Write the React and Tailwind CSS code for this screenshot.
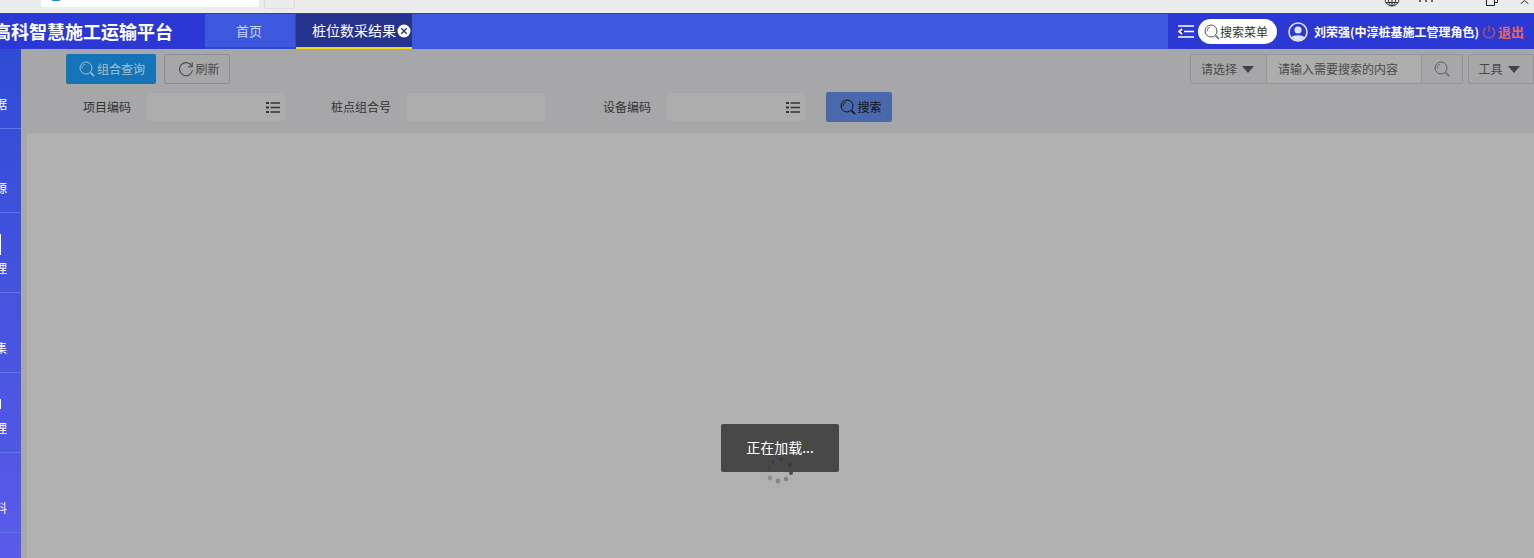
import React from "react";

const cjk = "font-['Microsoft_YaHei','Noto_Sans_CJK_SC','Liberation_Sans',sans-serif]";

// magnifier used on the toolbar buttons
function SearchIcon({ className = "", color = "currentColor", handle = "#56708e" }) {
  return (
    <svg viewBox="0 0 16 16" width="16" height="16" fill="none" className={className}>
      <circle cx="7" cy="7" r="6" stroke={color} strokeWidth="1" />
      <path d="M3 7.500A4 4 0 0 1 6 3.200" stroke={color} strokeWidth="0.8" />
      <path d="M11.500 11.500L15 15" stroke={handle} strokeWidth="1.700" />
    </svg>
  );
}

function ListIcon() {
  return (
    <svg viewBox="0 0 14 13" width="14" height="13" className="text-[#333]">
      <path d="M0 1h3v2H0zM0 5.500h3v2H0zM0 10h3v2H0z" fill="currentColor" />
      <path d="M4.500 1.300H14v1.400H4.500zM4.500 5.800H14v1.400H4.500zM4.500 10.300H14v1.400H4.500z" fill="currentColor" />
    </svg>
  );
}

function Caret({ color = "#444" }) {
  return (
    <svg viewBox="0 0 12 7" width="12" height="7">
      <path d="M0 0h12L6 7z" fill={color} />
    </svg>
  );
}

const sideItems = [
  { label: "数据", h: "h-[80px]" },
  { label: "资源", h: "h-[84px]" },
  { label: "管理", h: "h-[80px]", bar: "mb-[5px] h-[21px]" },
  { label: "采集", h: "h-[80px]" },
  { label: "管理", h: "h-[80px]", bar: "mb-[11px] h-[10px]" },
  { label: "资料", h: "h-[80px]" },
];

function Field({ label, labelW, list }) {
  return (
    <div className="flex items-center">
      <span className={`${labelW} text-right text-[12px] leading-[28px] text-[#333]`}>{label}</span>
      <div className="ml-[16px] flex h-[28px] w-[138px] items-center justify-end bg-[#adadad] pr-[5px]">
        {list && <ListIcon />}
      </div>
    </div>
  );
}

export default function App() {
  return (
    <div className={`${cjk} flex h-[558px] w-[1534px] flex-col overflow-hidden bg-[#b0b0b0]`}>
      {/* browser strip */}
      <div className="flex h-[13px] shrink-0 items-start overflow-hidden bg-[#ececec]">
        <div className="ml-[41px] h-[7px] w-[218px] rounded-b-[3px] bg-white pl-[11px]">
          <div className="h-[1px] w-[8px] bg-[#1f8fd8]" />
        </div>
        <div className="ml-[5px] h-[9px] w-[31px] rounded-b-[3px] border border-t-0 border-[#dcdcdc]" />
        <div className="ml-auto flex items-start pr-[5px]">
          <svg viewBox="0 0 16 7" width="16" height="7" fill="none" stroke="#333">
            <circle cx="8" cy="-1" r="7" />
            <path d="M8 0v6M4.500 0C4.500 3 6 5.500 8 6C10 5.500 11.500 3 11.500 0M1.500 2.500h13" />
          </svg>
          <div className="ml-[19px] flex gap-[4px]">
            <span className="h-[2px] w-[2px] bg-[#666]" />
            <span className="h-[2px] w-[2px] bg-[#666]" />
            <span className="h-[2px] w-[2px] bg-[#666]" />
          </div>
          <svg viewBox="0 0 12 6" width="12" height="6" fill="none" stroke="#222" className="ml-[53px]">
            <path d="M0.500 0V5.500H8.500V0M8.500 2.500H11.500V0" />
          </svg>
          <svg viewBox="0 0 9 4" width="9" height="4" fill="none" stroke="#222" className="ml-[22px]">
            <path d="M0.500 4L4.500 0.500L8.500 4" />
          </svg>
        </div>
      </div>

      {/* top nav */}
      <div className="flex h-[36px] shrink-0 border-t border-[#2c38d3] bg-[#3d58dd] text-white">
        <div className="flex h-full w-[205px] items-center justify-end overflow-hidden whitespace-nowrap bg-[#2c38d3] pr-[32px] text-[18px] font-bold">
          高科智慧施工运输平台
        </div>
        <div className="flex h-full w-[91px] items-center justify-center border-r border-b-[2px] border-[#3049c8] pr-[2px] text-[13px] text-[#cbd5f7]">首页</div>
        <div className="flex h-full w-[116px] items-center gap-[1px] border-b-[2px] border-[#f5d90e] bg-[#27348e] pl-[16px] text-[14px]">
          <span className="whitespace-nowrap">桩位数采结果</span>
          <svg viewBox="0 0 14 14" width="14" height="14">
            <circle cx="7" cy="7" r="6.500" fill="#fff" />
            <path d="M4.300 4.300l5.400 5.400M9.700 4.300l-5.400 5.400" stroke="#27348e" strokeWidth="1.400" />
          </svg>
        </div>
        <div className="ml-auto flex h-full w-[366px] items-center bg-[#2c38d3] pl-[10px]">
          <svg viewBox="0 0 16 13" width="16" height="13" stroke="#fff" strokeWidth="1.700" fill="none">
            <path d="M0 1h16M6 6.500h10M0 12h16M4 4L1 6.500l3 2.500" />
          </svg>
          <div className="ml-[4px] flex h-[25px] w-[79px] items-center rounded-full bg-white pl-[6px] text-[12px] text-[#333]">
            <SearchIcon className="shrink-0" color="#555" />
            <span className="whitespace-nowrap">搜索菜单</span>
          </div>
          <svg viewBox="0 0 20 20" width="20" height="20" className="ml-[11px]">
            <circle cx="10" cy="10" r="9" fill="none" stroke="#dfe3f8" strokeWidth="1.600" />
            <circle cx="10" cy="8" r="3.600" fill="#dfe3f8" />
            <path d="M3.500 15.500C5 12.500 15 12.500 16.500 15.500A9 9 0 0 1 3.500 15.500z" fill="#dfe3f8" />
          </svg>
          <span className="ml-[6px] whitespace-nowrap text-[12px] font-bold">刘荣强(中淳桩基施工管理角色)</span>
          <svg viewBox="0 0 14 14" width="14" height="14" fill="none" stroke="#c85548" strokeWidth="1.200" className="ml-[3px]">
            <path d="M4 2.800A5.500 5.500 0 1 0 10 2.800M7 0.500V6.500" />
          </svg>
          <span className="ml-[2px] whitespace-nowrap text-[13px] font-bold text-[#f0654f]">退出</span>
        </div>
      </div>

      <div className="flex min-h-0 flex-1">
        {/* side menu */}
        <div className="flex h-full w-[21px] shrink-0 flex-col bg-gradient-to-b from-[#2f4cd4] to-[#5a5aea]">
          {sideItems.map((item, i) => (
            <div key={i} className={`${item.h} flex shrink-0 flex-col items-end justify-end border-b border-[#5f74e6] pb-[16px] text-[12px] leading-[16px] text-white`}>
              {item.bar && <span className={`${item.bar} mr-[20px] w-[1px] bg-white`} />}
              <span className="mr-[14px] whitespace-nowrap">{item.label}</span>
            </div>
          ))}
        </div>

        <div className="flex min-w-0 flex-1 flex-col">
          {/* toolbar + search */}
          <div className="h-[84px] shrink-0 bg-[#a7a7a9] pl-[45px] pt-[5px]">
            <div className="flex items-center">
              <div className="flex h-[30px] w-[90px] items-center justify-center gap-[2px] rounded-[2px] bg-[#1574b8] pl-[2px] text-[12px] text-[#a9bfcf]">
                <SearchIcon color="#a9bfcf" handle="#a9bfcf" />
                组合查询
              </div>
              <div className="ml-[8px] flex h-[30px] w-[66px] items-center justify-center gap-[1px] rounded-[2px] border border-[#8d8d8f] pl-[4px] text-[12px] text-[#4a4a4a]">
                <svg viewBox="0 0 16 16" width="16" height="16" fill="none" stroke="#4a4a4a" strokeWidth="1.100">
                  <path d="M14 5.500A6.500 6.500 0 1 0 14.500 9" />
                  <path d="M14.300 1.500V5.800H10" />
                </svg>
                刷新
              </div>
              <div className="ml-auto flex h-[30px] items-stretch text-[12px] text-[#4a4a4a]">
                <div className="flex w-[77px] items-center justify-center gap-[5px] rounded-l-[2px] border border-[#949496] pr-[2px]">
                  请选择
                  <Caret />
                </div>
                <div className="flex w-[154px] items-center border-y border-[#949496] bg-[#adadad] pl-[11px]">请输入需要搜索的内容</div>
                <div className="flex w-[42px] items-center justify-center rounded-r-[2px] border border-[#949496]">
                  <SearchIcon color="#56606e" />
                </div>
                <div className="ml-[5px] flex w-[66px] items-center justify-center gap-[5px] rounded-[2px] border border-[#949496] pr-[4px]">
                  工具
                  <Caret />
                </div>
              </div>
            </div>
            <div className="mt-[8px] flex items-center">
              <Field label="项目编码" labelW="w-[65px]" list />
              <Field label="桩点组合号" labelW="w-[106px]" />
              <Field label="设备编码" labelW="w-[106px]" list />
              <div className="ml-[21px] flex h-[30px] w-[66px] items-center justify-center gap-[1px] rounded-[2px] bg-[#4a69ad] pl-[4px] text-[12px] text-[#111]">
                <SearchIcon color="#111" handle="#111" />
                搜索
              </div>
            </div>
          </div>

          {/* empty grid with loading mask */}
          <div className="relative flex flex-1">
            <div className="w-[6px] shrink-0 bg-[#a7a7a9]" />
            <div className="flex-1" />
            <div className="absolute left-[700px] top-[291px] flex h-[48px] w-[118px] justify-center rounded-[2px] bg-[#484848] pt-[13px] text-[14px] leading-[20px] text-white">
              正在加载...
            </div>
            <svg viewBox="0 0 32 32" width="32" height="32" className="absolute left-[742px] top-[320px]">
              <circle cx="27" cy="12" r="2" fill="#333" opacity="0.8" />
              <circle cx="28" cy="20" r="2" fill="#444" opacity="0.9" />
              <circle cx="23" cy="26" r="2.200" fill="#808080" />
              <circle cx="15" cy="28" r="2.400" fill="#858585" />
              <circle cx="7" cy="25" r="2.400" fill="#8d8d8d" />
              <circle cx="18" cy="6" r="1.500" fill="#333" opacity="0.7" />
              <circle cx="10" cy="9" r="1.200" fill="#333" opacity="0.6" />
              <circle cx="6" cy="14" r="1" fill="#333" opacity="0.5" />
            </svg>
          </div>
        </div>
      </div>
    </div>
  );
}
